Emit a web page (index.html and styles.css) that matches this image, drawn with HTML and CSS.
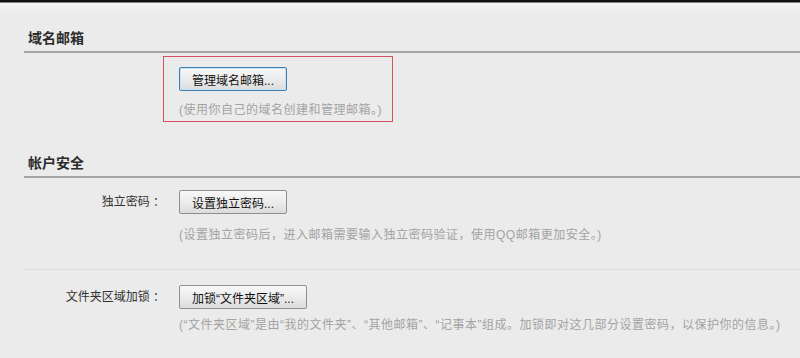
FILE: index.html
```html
<!DOCTYPE html>
<html lang="zh-CN">
<head>
    <meta charset="UTF-8">
    <meta name="viewport" content="width=device-width, initial-scale=1.0">
    <title>设置 - 帐户</title>
    <link rel="stylesheet" href="styles.css">
</head>
<body>
    <div class="page">
        <div class="section">
            <h2 class="section-title">域名邮箱</h2>
            <div class="highlight">
                <button class="btn btn-focus">管理域名邮箱...</button>
                <p class="hint">(使用你自己的域名创建和管理邮箱。)</p>
            </div>
        </div>

        <div class="section section-account">
            <h2 class="section-title">帐户安全</h2>
            <div class="row row-split">
                <label class="row-label">独立密码 ：</label>
                <div class="row-body">
                    <button class="btn">设置独立密码...</button>
                    <p class="hint">(设置独立密码后，进入邮箱需要输入独立密码验证，使用QQ邮箱更加安全。)</p>
                </div>
            </div>
            <div class="row row-last">
                <label class="row-label">文件夹区域加锁 ：</label>
                <div class="row-body">
                    <button class="btn">加锁“文件夹区域”...</button>
                    <p class="hint">(“文件夹区域”是由“我的文件夹”、“其他邮箱”、“记事本”组成。加锁即对这几部分设置密码，以保护你的信息。)</p>
                </div>
            </div>
        </div>
    </div>
</body>
</html>
```

FILE: styles.css
```css
:root {
    --bg: #ebebeb;
    --text: #333333;
    --muted: #a3a3a3;
    --rule: #a4a4a4;
}

body {
    margin: 0;
    min-height: 100vh;
    font-family: "Liberation Sans", "Noto Sans CJK SC", sans-serif;
    font-size: 12px;
    color: var(--text);
    background: linear-gradient(#111111 0, #111111 2px, #f5f5f5 3px, var(--bg) 12px) no-repeat, var(--bg);
}

.page {
    min-height: 100vh;
    padding: 0 0 0 24px;
    border-left: 2px solid #f4f4f4;
    box-sizing: border-box;
    margin-left: -2px;
}

.section {
    padding-top: 28px;
}

.section-account {
    padding-top: 31px;
}

.section-title {
    margin: 0;
    padding: 0 0 3px 4px;
    font-size: 14px;
    font-weight: bold;
    line-height: 20px;
    color: #2b2b2b;
    border-bottom: 2px solid var(--rule);
}

.highlight {
    margin: 3px 0 0 139px;
    width: 198px;
    padding: 10px 15px 3px;
    border: 1px solid #d8505f;
}

.btn {
    display: block;
    height: 24px;
    padding: 0 12px;
    font-family: inherit;
    font-size: 12px;
    color: #111111;
    border: 1px solid #8f8f8f;
    border-radius: 2px;
    background: linear-gradient(#f8f8f8 0%, #ececec 50%, #dcdcdc 100%);
    cursor: pointer;
}

.btn-focus {
    border-color: #3a7fb3;
    box-shadow: inset 0 0 0 1px #c9e3f5;
}

.hint {
    margin: 11px 0 0;
    line-height: 16px;
    letter-spacing: 0.5px;
    color: var(--muted);
    white-space: nowrap;
}

.row {
    display: grid;
    grid-template-columns: 155px 1fr;
    padding-top: 12px;
}

.row-split {
    padding-bottom: 26px;
    border-bottom: 1px solid #dedede;
}

.row-last {
    padding-top: 15px;
}

.row-label {
    padding-right: 14px;
    line-height: 24px;
    text-align: right;
}

.row .hint {
    margin-top: 13px;
}

.row-last .hint {
    margin-top: 8px;
}
```
